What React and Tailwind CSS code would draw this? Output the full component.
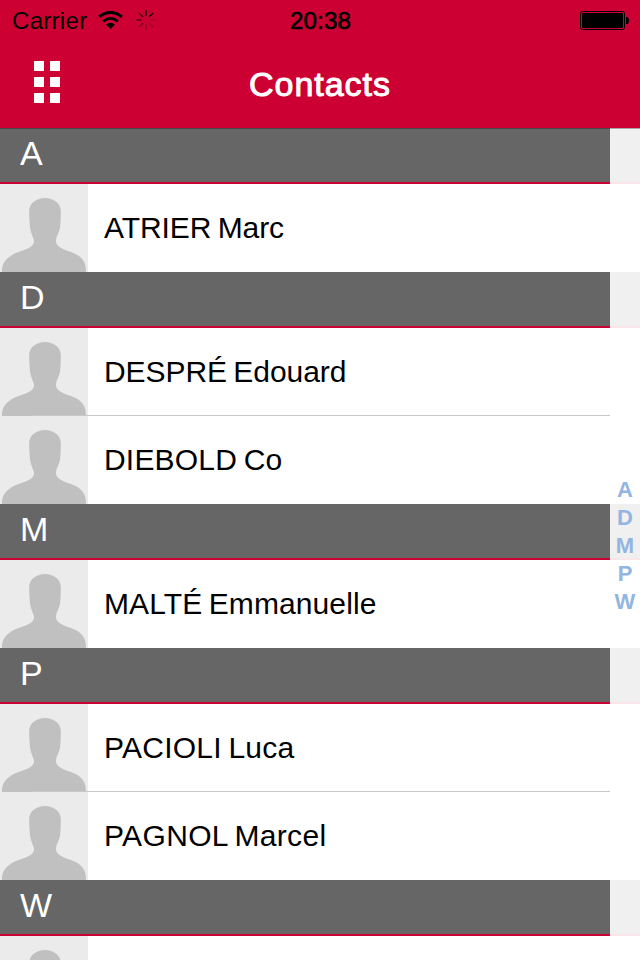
const sections = [
  { letter: 'A', people: [{ name: 'ATRIER Marc', spacing: 'tracking-[-0.07px]' }] },
  {
    letter: 'D',
    people: [
      { name: 'DESPRÉ Edouard', spacing: 'tracking-[-0.05px]' },
      { name: 'DIEBOLD Co', spacing: 'tracking-[0.2px]' },
    ],
  },
  { letter: 'M', people: [{ name: 'MALTÉ Emmanuelle', spacing: 'tracking-[0.1px]' }] },
  {
    letter: 'P',
    people: [
      { name: 'PACIOLI Luca', spacing: 'tracking-[0.24px]' },
      { name: 'PAGNOL Marcel', spacing: 'tracking-[0.34px]' },
    ],
  },
  { letter: 'W', people: [{ name: '', spacing: '' }] },
];

function Wifi() {
  return (
    <svg className="ml-[11px] h-[18px] w-[25px]" viewBox="0 0 25 18" fill="none" stroke="#000">
      <path d="M1.1 5.9Q12.500-3.200 23.9 5.9" strokeWidth="3" />
      <path d="M5.1 10.5Q12.5 4.400 19.9 10.5" strokeWidth="2.7" />
      <path d="M12.5 18L8.1 13.6Q12.5 10 16.9 13.6Z" fill="#000" stroke="none" />
    </svg>
  );
}

function Spinner() {
  const opacities = [0.9, 0.9, 0.15, 0.2, 0.28, 0.38, 0.5, 0.65];
  return (
    <svg className="ml-[13px] h-5 w-5" viewBox="0 0 20 20" stroke="#000" strokeWidth="1.5">
      {opacities.map((o, i) => (
        <path key={i} d="M10 0V5.800" opacity={o} transform={`rotate(${i * 45} 10 10)`} />
      ))}
    </svg>
  );
}

function Battery() {
  return (
    <svg className="h-[19px] w-[49px]" viewBox="0 0 49 19">
      <rect x=".5" y=".5" width="44" height="18" rx="2" fill="none" stroke="#000" />
      <rect x="2" y="2" width="41" height="15" rx="1" fill="#000" />
      <path d="M46 6h1.5q1.5 1 1.5 3.5t-1.5 3.5H46z" fill="#000" />
    </svg>
  );
}

function Avatar({ divided }) {
  return (
    <svg className="h-[88px] w-[88px] shrink-0 bg-[#ebebeb]" viewBox="0 0 88 88">
      <path
        fill="#c0c0c0"
        d="M2 88C2 81 4 77 8.300 73.700C12 70.500 16 68.500 22 66.700C28 65 34.300 62 34 57C33.500 53 30.700 49.500 30 43C29.500 38 29.200 32 29.200 27C29.200 19 37 14 45 14C53 14 60.800 19 60.800 27C60.800 32 60.600 38 60.200 42C59.500 49 56 52 56 57C56 62 62 65 68 67C74 69 79 71 82.500 75.500C85 79 86 82 86 88Z"
      />
      {divided && <path d="M32 87.5H88" stroke="#c8c8c8" />}
    </svg>
  );
}

function Header() {
  return (
    <header className="h-32 bg-[#cc0033]">
      <div className="grid h-10 grid-cols-3 items-center pr-[11px] pl-3 text-2xl leading-10">
        <div className="flex items-center">
          <span className="h-10 leading-[42px] tracking-[0.3px]">Carrier</span>
          <Wifi />
          <Spinner />
        </div>
        <span className="h-10 text-center leading-[42px] tracking-[0.15px] [-webkit-text-stroke:0.7px_#000]">20:38</span>
        <div className="flex justify-end">
          <Battery />
        </div>
      </div>
      <div className="grid h-[88px] grid-cols-3 text-white">
        <div className="ml-[34px] grid w-[26px] grid-cols-2 content-start gap-1.5 pt-[21px]">
          {[0, 1, 2, 3, 4, 5].map((i) => (
            <i key={i} className="h-2.5 w-2.5 bg-white" />
          ))}
        </div>
        <h1 className="text-center text-[34px] leading-[88px] tracking-[0.95px] [-webkit-text-stroke:1px_#fff]">
          Contacts
        </h1>
      </div>
    </header>
  );
}

export default function App() {
  return (
    <div className="relative h-[960px] w-[640px] overflow-hidden bg-white font-['Liberation_Sans',sans-serif] text-black">
      <Header />
      <main>
        {sections.map(({ letter, people }) => (
          <section key={letter}>
            <h2 className="h-14 border-b-2 border-[#cc0033] bg-[#666] pl-5 text-[34px] leading-[51px] text-white">
              {letter}
            </h2>
            {people.map(({ name, spacing }, i) => (
              <div key={i} className="flex h-[88px]">
                <Avatar divided={i < people.length - 1} />
                <div
                  className={`mr-[30px] flex-1 pl-4 text-[30px] leading-[87px] whitespace-nowrap [word-spacing:-2px] ${
                    i < people.length - 1 ? 'border-b border-[#c8c8c8]' : ''
                  }`}
                >
                  <span className={spacing}>{name}</span>
                </div>
              </div>
            ))}
          </section>
        ))}
      </main>
      <nav className="absolute top-32 right-0 bottom-0 flex w-[30px] flex-col items-center bg-white/90 pt-[348px] text-[22px] leading-7 font-bold text-[#93b5e1]">
        {sections.map(({ letter }) => (
          <span key={letter}>{letter}</span>
        ))}
      </nav>
      <div className="absolute top-32 h-px w-full bg-black/30" />
    </div>
  );
}
